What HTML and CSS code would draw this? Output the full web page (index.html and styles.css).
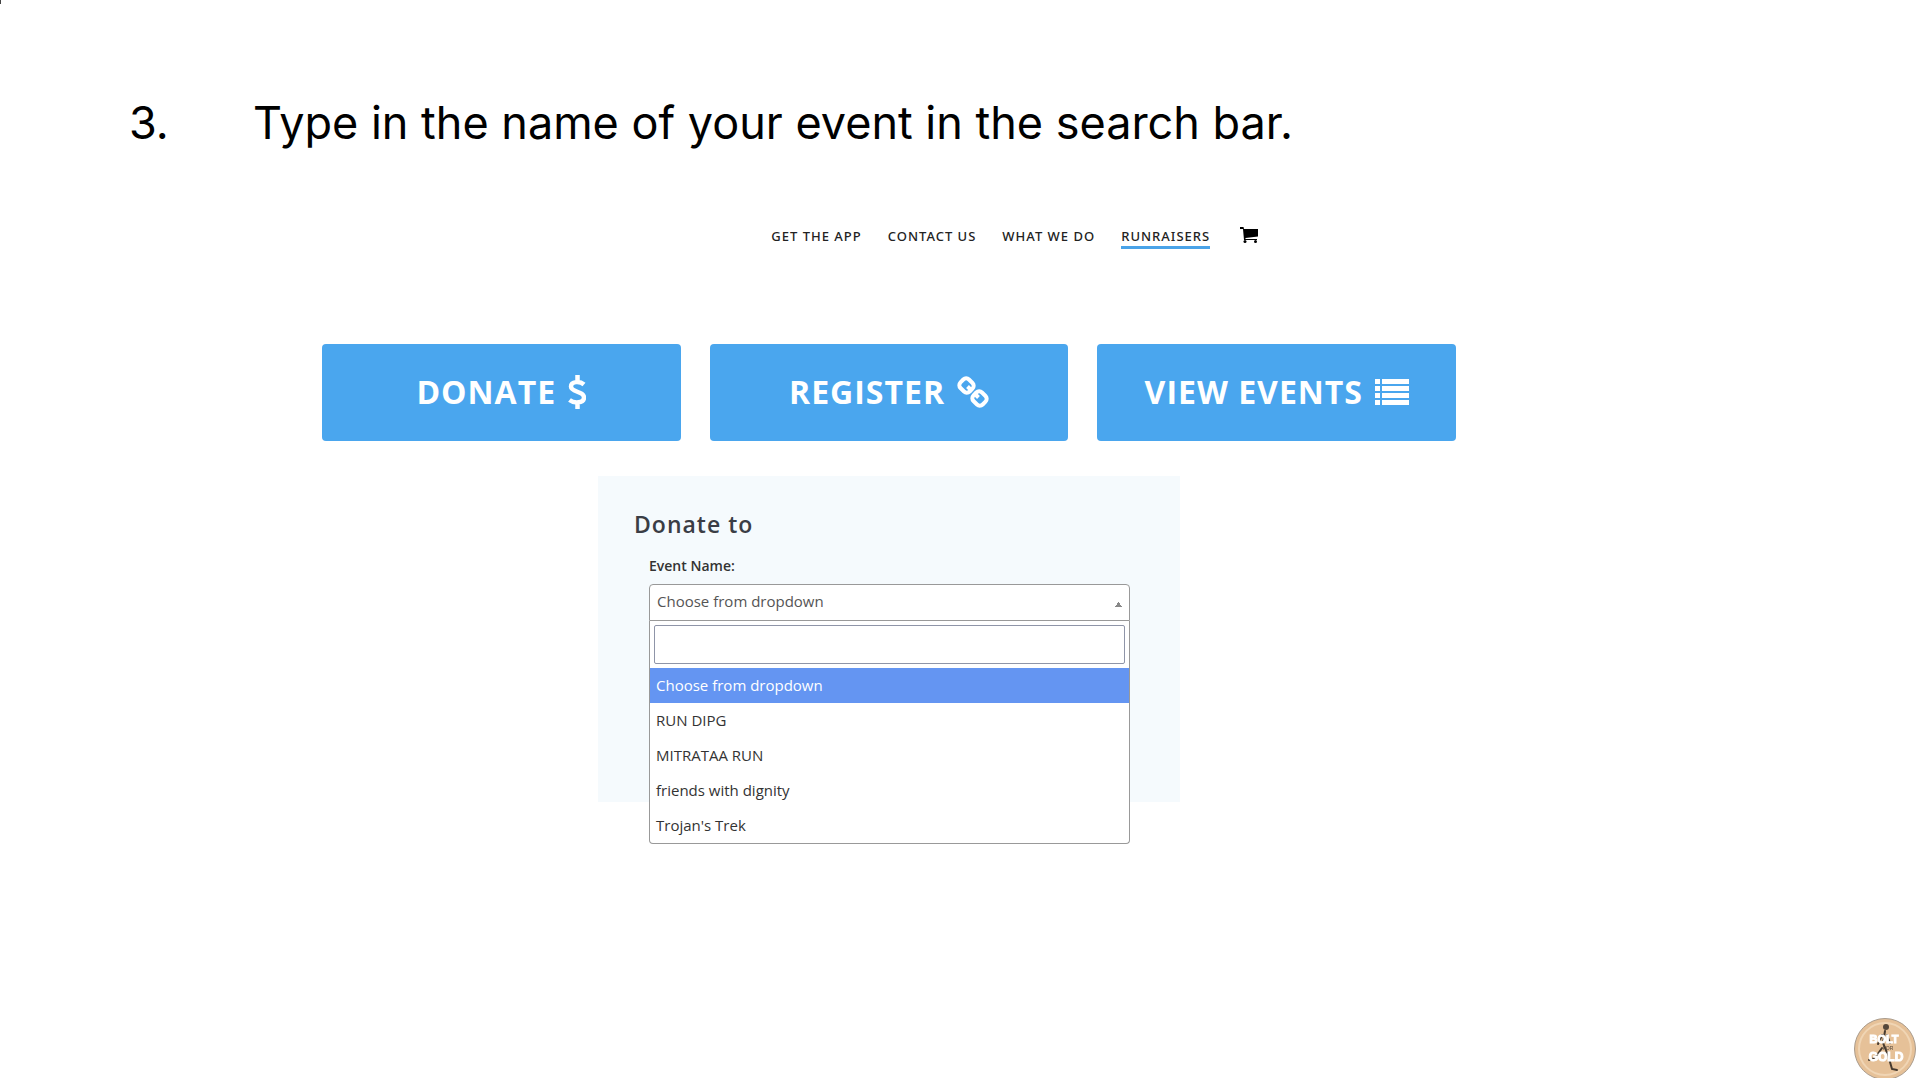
FILE: index.html
```html
<!DOCTYPE html>
<html lang="en">
<head>
<meta charset="utf-8">
<meta name="viewport" content="width=device-width, initial-scale=1">
<title>Find your event</title>
<link rel="stylesheet" href="styles.css">
</head>
<body>
<div class="caret"></div>
<h1 class="step"><span class="step-number">3.</span><span>Type in the name of your event in the search bar.</span></h1>
<main class="site">
  <nav class="nav">
    <a class="nav-link" href="#">GET THE APP</a>
    <a class="nav-link" href="#">CONTACT US</a>
    <a class="nav-link" href="#">WHAT WE DO</a>
    <a class="nav-link nav-current" href="#">RUNRAISERS</a>
    <a class="nav-cart" href="#" aria-label="Cart">
      <svg width="18" height="16" viewBox="0 0 18 16"><path d="M0 0h3.500l.5 2H18v7.500L5.500 11v1H17v1H4L3 2H0z"/><circle cx="5" cy="14.500" r="1.500"/><circle cx="15.500" cy="14.500" r="1.500"/></svg>
    </a>
  </nav>
  <div class="actions">
    <button class="action" type="button">DONATE
      <svg width="18" height="34" viewBox="0 0 18 34"><path d="M16 9.500C12 6 3 6 3 11.500c0 6 13 4.500 13 11 0 6-10 6-14.500 2.500M9.500 0v7M9.500 27v7" fill="none" stroke="currentColor" stroke-width="4.500"/></svg>
    </button>
    <button class="action" type="button">REGISTER
      <svg width="32" height="32" viewBox="0 0 32 32"><g fill="none" stroke="currentColor" stroke-width="4"><rect x="3" y="3.500" width="13" height="12" rx="4" transform="rotate(45 9.500 9.500)"/><rect x="16" y="16.500" width="13" height="12" rx="4" transform="rotate(45 22.500 22.500)"/><path d="M10.500 10.500l3 3M18.500 18.500l3 3"/></g></svg>
    </button>
    <button class="action" type="button">VIEW EVENTS
      <svg width="34" height="26" viewBox="0 0 34 26" fill="currentColor"><path d="M0 0h5v5H0zM7 0h27v5H7zM0 7h5v5H0zM7 7h27v5H7zM0 14h5v5H0zM7 14h27v5H7zM0 21h5v5H0zM7 21h27v5H7z"/></svg>
    </button>
  </div>
  <section class="card">
    <h2 class="card-title">Donate to</h2>
    <div class="field">
      <label class="field-label" for="event">Event Name:</label>
      <select class="select" id="event"><option>Choose from dropdown</option></select>
      <div class="menu">
        <div class="search"><input class="search-input" type="text" aria-label="Search events"></div>
        <ul class="options" role="listbox" aria-label="Events">
          <li class="option option-active" role="option" aria-selected="true">Choose from dropdown</li>
          <li class="option" role="option">RUN DIPG</li>
          <li class="option" role="option">MITRATAA RUN</li>
          <li class="option" role="option">friends with dignity</li>
          <li class="option" role="option">Trojan's Trek</li>
        </ul>
      </div>
    </div>
  </section>
</main>
<svg class="badge" width="62" height="62" viewBox="0 0 62 62" role="img" aria-label="Bolt for Gold">
  <circle cx="31" cy="31" r="30.500" fill="#e6c198" stroke="#a99b8c"/>
  <circle cx="31" cy="31" r="26" fill="none" stroke="#f0d5b4" stroke-width="2"/>
  <g fill="none" stroke="#463a2f" stroke-width="2" stroke-linecap="round"><path d="M31 13l-2 12 5 12 4 14 5 1M28 30l-7 10-6 2M28 17l-4 9M33 17l3 8"/></g>
  <ellipse cx="32" cy="9" rx="3" ry="3" fill="#54473b"/>
  <g class="badge-text" text-anchor="middle"><text x="30" y="25" font-size="11">BOLT</text><text x="32" y="43" font-size="12">GOLD</text></g>
  <text class="badge-small" x="34" y="32" font-size="5" text-anchor="middle">FOR</text>
</svg>
</body>
</html>
```
FILE: styles.css
```css
* { box-sizing: border-box; }
body {
  margin: 0;
  min-height: 100vh;
  background: #fff;
  color: #333;
  font-family: "Open Sans", "Noto Sans", sans-serif;
}
.caret {
  position: absolute;
  top: 0;
  left: 0;
  width: 1px;
  height: 4px;
  background: #444;
}
.step {
  display: flex;
  margin: 0;
  padding: 93px 24px 0 129px;
  color: #000;
  font-family: Inter, sans-serif;
  font-size: 45px;
  font-weight: 400;
  line-height: 60px;
}
.step-number { flex: 0 0 124px; }
.site { padding: 0 24% 0 16.8%; }
.nav {
  display: flex;
  justify-content: flex-end;
  align-items: flex-start;
  gap: 26px;
  padding: 73px 198px 0 0;
}
.nav-link {
  border-bottom: 3px solid transparent;
  color: #222;
  font-family: "Noto Sans", sans-serif;
  font-size: 13px;
  font-weight: 500;
  letter-spacing: 1px;
  line-height: 20px;
  text-decoration: none;
  white-space: nowrap;
}
.nav-current { border-color: #4aa3e8; }
.nav-cart { margin-left: 4px; padding-top: 1px; color: #000; line-height: 0; }
.actions {
  display: grid;
  grid-template-columns: repeat(3, minmax(0, 1fr));
  gap: 29px;
  padding-top: 95px;
}
.action {
  display: flex;
  justify-content: center;
  align-items: center;
  gap: 12px;
  height: 97px;
  padding: 0 6px 2px;
  border: 0;
  border-radius: 4px;
  background: #4aa6ee;
  color: #fff;
  font: bold 32px/44px "Open Sans", "Noto Sans", sans-serif;
  letter-spacing: 1px;
}
.card {
  width: 582px;
  max-width: 100%;
  height: 326px;
  margin: 35px auto 0;
  padding: 31px 50px 0 36px;
  background: #f5fafd;
}
.card-title {
  margin: 0;
  color: #3a3d45;
  font-size: 23px;
  font-weight: 600;
  letter-spacing: 1px;
  line-height: 34px;
}
.field { position: relative; padding: 15px 0 0 15px; }
.field-label {
  display: block;
  color: #333;
  font-size: 14px;
  font-weight: 600;
  line-height: 20px;
}
.select {
  display: block;
  width: 100%;
  height: 37px;
  margin-top: 8px;
  padding: 0 7px 3px;
  appearance: none;
  border: 1px solid #999;
  border-radius: 4px 4px 0 0;
  background: #fff conic-gradient(from 146deg at 50% 0, #888 68deg, transparent 0) right 7px top 17px / 7px 5px no-repeat;
  color: #555;
  font: 15px "Open Sans", "Noto Sans", sans-serif;
}
.menu {
  position: absolute;
  top: 100%;
  right: 0;
  left: 15px;
  border: 1px solid #999;
  border-top: 0;
  border-radius: 0 0 4px 4px;
  background: #fff;
}
.search { padding: 4px; }
.search-input {
  display: block;
  width: 100%;
  height: 39px;
  border: 1px solid #8f95a8;
  border-radius: 2px;
  background: #fff;
}
.options { margin: 0; padding: 0; list-style: none; }
.option {
  padding: 0 6px;
  font-size: 15px;
  line-height: 35px;
}
.option-active { background: #6495f2; color: #fff; }
.badge { position: fixed; right: 0; bottom: -2px; }
.badge-text { fill: #fff; stroke: #fff; font-family: "Liberation Sans", sans-serif; font-weight: bold; }
.badge-small { fill: #54473b; font-family: "Liberation Sans", sans-serif; }
```
